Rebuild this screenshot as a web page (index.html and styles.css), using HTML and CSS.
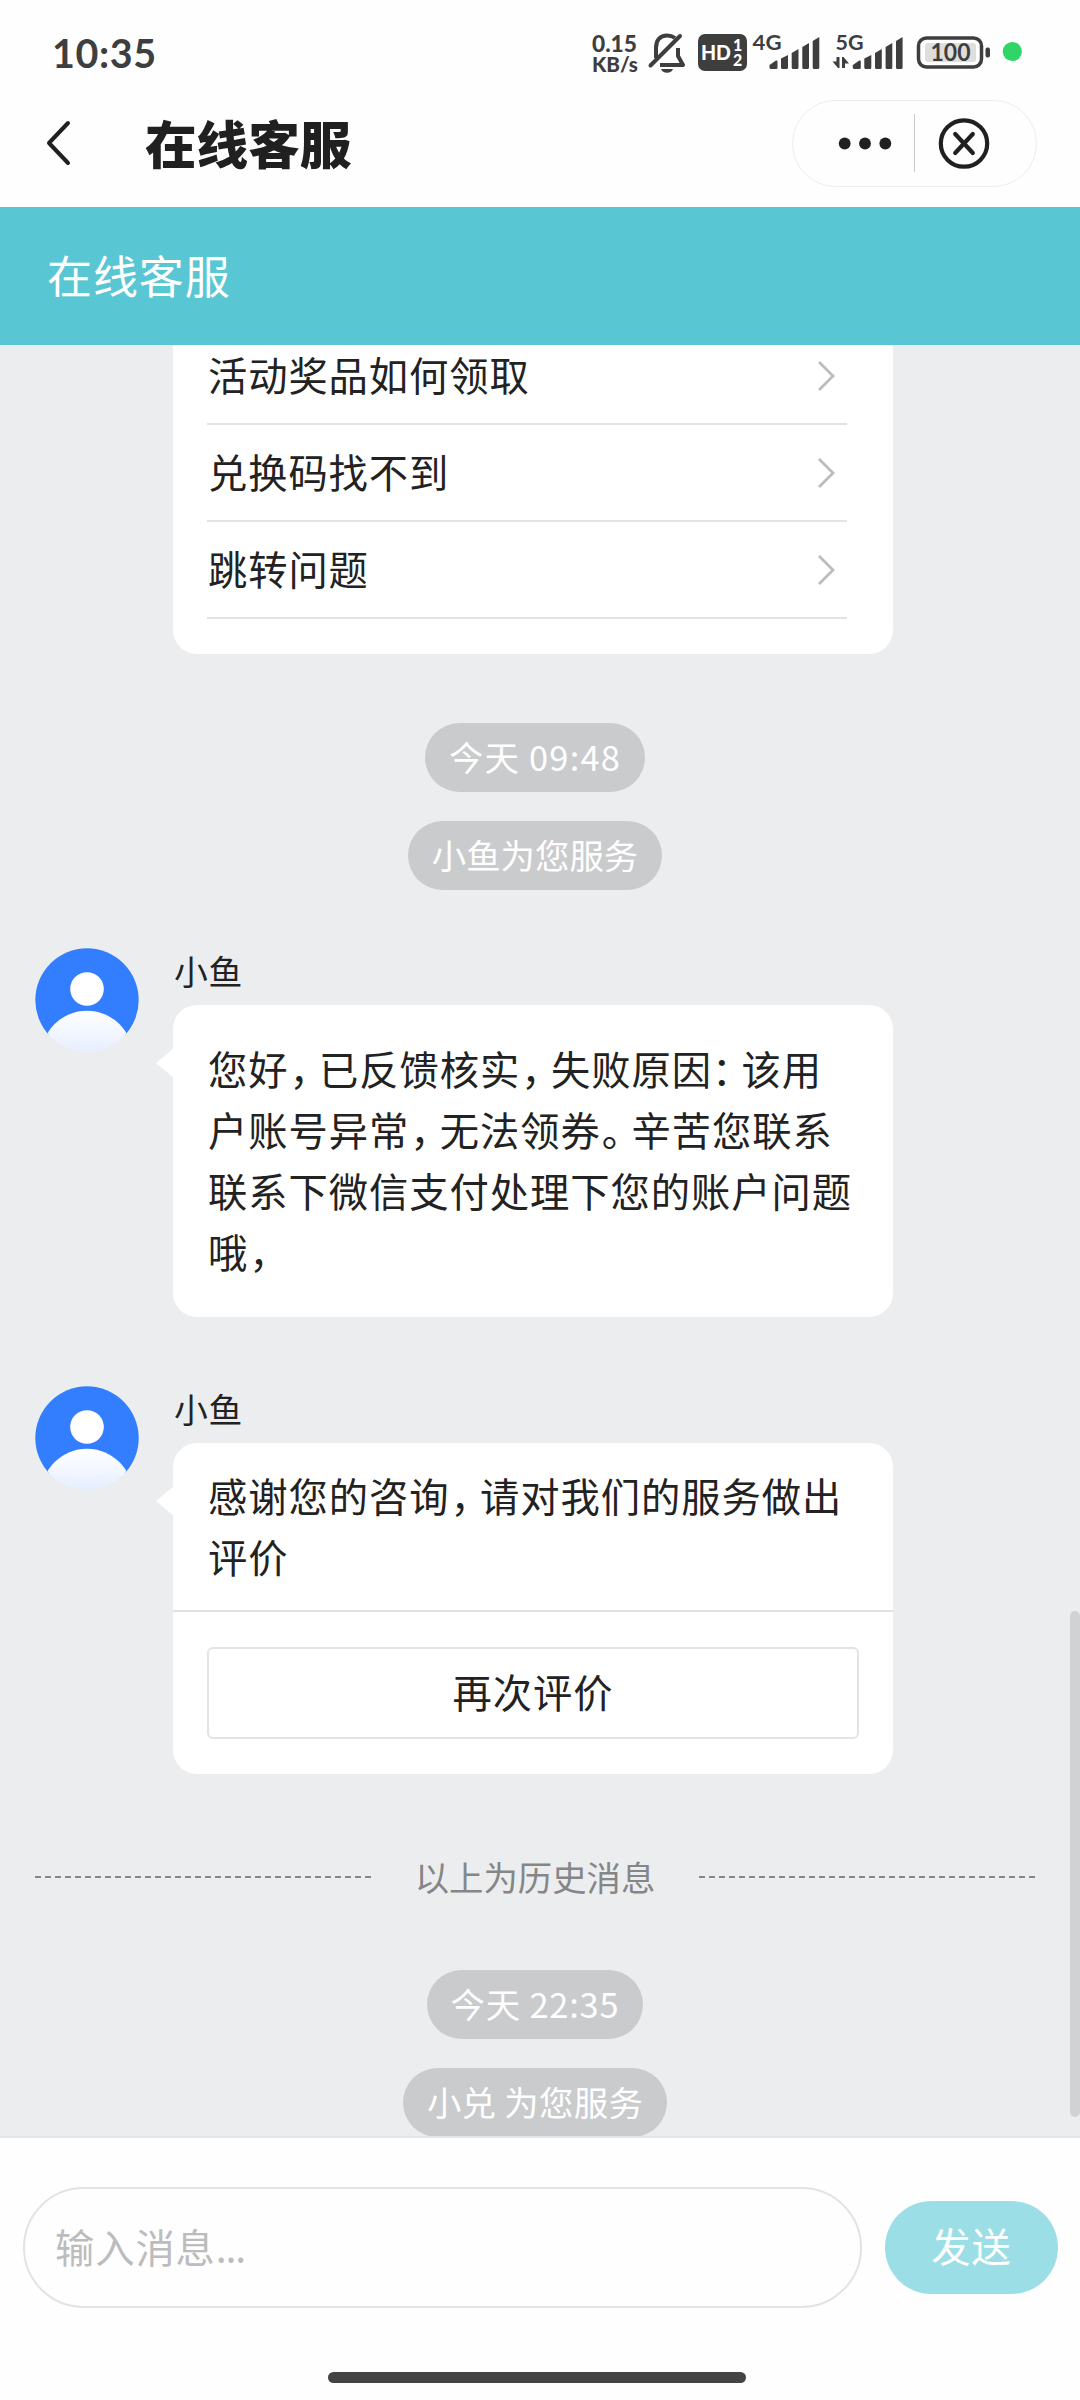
FILE: index.html
```html
<!DOCTYPE html>
<html lang="zh-CN">
<head>
<meta charset="utf-8">
<title>在线客服</title>
<link rel="stylesheet" href="styles.css">
</head>
<body>
<div class="screen">
  <div class="status">
    <span class="clock">10:35</span>
    <svg class="status-icons" width="440" height="50" viewBox="590 28 440 50">
      <g fill="#3e3e3e" class="status-text heavy">
        <text x="592" y="52" font-size="22.500" textLength="45" lengthAdjust="spacingAndGlyphs">0.15</text>
        <text x="592" y="72" font-size="20.500" textLength="46" lengthAdjust="spacingAndGlyphs">KB/s</text>
      </g>
      <g fill="none" stroke="#3e3e3e" stroke-width="4" stroke-linejoin="round">
        <path d="M656 58V48C656 40 660 35.500 667 35.500C670 35.500 673 36.500 675 38M678 48V56L683 65H660"/>
        <path d="M650.500 65.500L680 36" stroke-linecap="round"/>
      </g>
      <path d="M661 69H673C672 71.500 670 72.700 667 72.700C664 72.700 662 71.500 661 69Z" fill="#3e3e3e"/>
      <rect x="698" y="34" width="49" height="37" rx="7" fill="#3e3e3e"/>
      <g fill="#fff" class="status-text heavy">
        <text x="701" y="60" font-size="21" textLength="30" lengthAdjust="spacingAndGlyphs">HD</text>
        <text x="733" y="50.500" font-size="16">1</text>
        <text x="733" y="66" font-size="16">2</text>
      </g>
      <g fill="#3e3e3e" class="status-text">
        <text x="752.500" y="50" font-size="20.500" textLength="29" lengthAdjust="spacingAndGlyphs">4G</text>
        <text x="835.500" y="50" font-size="20.500" textLength="28" lengthAdjust="spacingAndGlyphs">5G</text>
      </g>
      <path id="bars" fill="#3e3e3e" d="M769.500 65L776 60.500Q777.500 60 777.500 61.500V67.500Q777.500 69 776 69H771Q769.500 69 769.500 67.500ZM781 58.500L788 55V67.500Q788 69 786.500 69H782.500Q781 69 781 67.500ZM791.700 53L798.500 49V67.500Q798.500 69 797 69H793.200Q791.700 69 791.700 67.500ZM802.300 47L809 43V67.500Q809 69 807.500 69H803.800Q802.300 69 802.300 67.500ZM812.700 41L819.300 37V67.500Q819.300 69 817.800 69H814.200Q812.700 69 812.700 67.500Z"/>
      <use href="#bars" x="83.300"/>
      <path fill="#3e3e3e" d="M836.500 57H839.500V68H838L832.500 61.500H836.500ZM842 68V57H843.500L849 63.500H845V68Z"/>
      <rect x="918.500" y="38" width="63" height="29" rx="8" fill="none" stroke="#3e3e3e" stroke-width="3.500"/>
      <rect x="925" y="43" width="51" height="19" rx="3" fill="#dedede"/>
      <rect x="985.500" y="47.500" width="4.500" height="10" rx="2" fill="#3e3e3e"/>
      <text class="status-text" fill="#3e3e3e" x="930.500" y="61" font-size="24" textLength="40" lengthAdjust="spacingAndGlyphs">100</text>
      <circle cx="1012.300" cy="51.500" r="9.600" fill="#2fd566"/>
    </svg>
  </div>

  <div class="nav">
    <svg class="back" width="28" height="50" viewBox="0 0 28 50"><path d="M24 5L5 25L24 45" fill="none" stroke="#202020" stroke-width="4" stroke-linecap="round" stroke-linejoin="round"/></svg>
    <h1 class="nav-title">在线客服</h1>
    <div class="capsule">
      <svg width="245" height="86" viewBox="0 0 245 86">
        <g fill="#202020"><circle cx="52.700" cy="43.500" r="5.900"/><circle cx="73" cy="43.500" r="5.900"/><circle cx="93.300" cy="43.500" r="5.900"/></g>
        <path d="M122.500 14V72" stroke="#c8c8c8"/>
        <g fill="none" stroke="#202020" stroke-width="4.200" stroke-linecap="round"><circle cx="172" cy="43.500" r="23.200"/><path d="M163.200 34L180.800 53M180.800 34L163.200 53"/></g>
      </svg>
    </div>
  </div>

  <header class="banner">在线客服</header>

  <main class="chat">
    <section class="faq">
      <div class="faq-row"><span>活动奖品如何领取</span><svg class="chev" viewBox="0 0 20 32"><path d="M3 2L17 16L3 30"/></svg></div>
      <div class="faq-row"><span>兑换码找不到</span><svg class="chev" viewBox="0 0 20 32"><path d="M3 2L17 16L3 30"/></svg></div>
      <div class="faq-row"><span>跳转问题</span><svg class="chev" viewBox="0 0 20 32"><path d="M3 2L17 16L3 30"/></svg></div>
    </section>

    <div class="notices first-notices">
      <span class="pill time-a">今天 09:48</span>
      <span class="pill">小鱼为您服务</span>
    </div>

    <article class="msg">
      <svg class="avatar" viewBox="0 0 104 104">
        <defs>
          <clipPath id="face"><circle cx="52" cy="52" r="51.700"/></clipPath>
          <linearGradient id="torso" x1="0" y1="0" x2="0" y2="1" gradientUnits="objectBoundingBox"><stop offset="0" stop-color="#fff"/><stop offset=".45" stop-color="#e6eeff"/></linearGradient>
        </defs>
        <g clip-path="url(#face)"><rect width="104" height="87" fill="#337eff"/><circle cx="52" cy="108.500" r="45.800" fill="url(#torso)"/><circle cx="52" cy="41" r="16.800" fill="#fff"/></g>
      </svg>
      <div class="msg-body">
        <div class="name">小鱼</div>
        <div class="bubble reply">您好<i>，</i>已反馈核实<i>，</i>失败原因<i class="colon">：</i>该用<br>户账号异常<i>，</i>无法领券<i>。</i>辛苦您联系<br>联系下微信支付处理下您的账户问题<br>哦<i>，</i></div>
      </div>
    </article>

    <article class="msg second">
      <svg class="avatar" viewBox="0 0 104 104">
        <g clip-path="url(#face)"><rect width="104" height="87" fill="#337eff"/><circle cx="52" cy="108.500" r="45.800" fill="url(#torso)"/><circle cx="52" cy="41" r="16.800" fill="#fff"/></g>
      </svg>
      <div class="msg-body">
        <div class="name">小鱼</div>
        <div class="bubble rating">
          <div class="rating-text">感谢您的咨询<i>，</i>请对我们的服务做出<br>评价</div>
          <div class="rating-action"><button class="rate-btn">再次评价</button></div>
        </div>
      </div>
    </article>

    <div class="history"><span class="dash"></span><span class="history-text">以上为历史消息</span><span class="dash"></span></div>

    <div class="notices last-notices">
      <span class="pill time-b">今天 22:35</span>
      <span class="pill service-b">小兑 为您服务</span>
    </div>
    <div class="scrollbar"></div>
  </main>

  <footer class="composer">
    <div class="input-row">
      <div class="input">输入消息<span class="dots">...</span></div>
      <button class="send">发送</button>
    </div>
    <div class="home"></div>
  </footer>
</div>
</body>
</html>
```
FILE: styles.css
```css
* { box-sizing: border-box; }
body { margin: 0; font-family: "Noto Sans CJK SC", sans-serif; color: #222; }
i { font-style: normal; font-feature-settings: "halt"; margin: 0 9px 0 1px; }
i.colon { margin: 0 9px 0 0; }
svg { display: block; flex: none; }
button { font: inherit; color: inherit; letter-spacing: inherit; padding: 0; }

.screen { width: 1080px; height: 2400px; display: flex; flex-direction: column; background: #fefefe; overflow: hidden; }

.status { height: 86px; flex: none; display: flex; justify-content: space-between; padding: 28px 50px 0 52px; }
.clock { font: 700 39.500px/50px Lato, sans-serif; color: #3e3e3e; letter-spacing: .6px; }
.status-text { font-family: Lato, sans-serif; font-weight: 700; }
.heavy { font-weight: 900; }

.nav { height: 121px; flex: none; display: flex; align-items: flex-start; padding-left: 44px; }
.back { margin-top: 32px; }
.nav-title { margin: 17px 0 0 73px; font-size: 51.600px; line-height: 78px; font-weight: 900; color: #202020; }
.capsule { width: 245px; height: 87px; margin: 14px 43px 0 auto; border: 1px solid #ededed; border-radius: 44px; }
.capsule svg { margin: -1px; }

.banner { height: 138px; flex: none; padding-left: 47px; background: #59c6d4; color: #fff; font-size: 45px; letter-spacing: .9px; line-height: 136px; }

.chat { position: relative; height: 1791px; flex: none; overflow: hidden; background: #ecedef; }
.faq { width: 720px; height: 309px; margin-left: 173px; padding: 0 46px 35px 34px; display: flex; flex-direction: column; justify-content: flex-end; background: #fff; border-radius: 0 0 24px 24px; }
.faq-row { height: 97px; flex: none; display: flex; align-items: center; justify-content: space-between; padding: 0 11px 0 1px; border-bottom: 2px solid #e3e3e4; font-size: 39.300px; letter-spacing: .9px; line-height: 60px; }
.faq-row span { padding-bottom: 4px; }
.chev { width: 20px; height: 32px; fill: none; stroke: #bcbcbc; stroke-width: 2.800px; }

.notices { display: flex; flex-direction: column; align-items: center; gap: 29px; padding-right: 10px; }
.first-notices { margin-top: 69px; }
.pill { flex: none; height: 69px; padding: 0 24px; border-radius: 35px; background: #cacbcd; color: #fff; font-size: 34.400px; line-height: 67px; text-align: center; white-space: nowrap; }
.time-a { width: 220px; padding: 0; letter-spacing: 1.200px; }
.time-b { width: 216px; padding: 0; letter-spacing: .8px; }
.service-b { width: 264px; padding: 0; letter-spacing: .3px; }

.msg { display: flex; align-items: flex-start; margin-top: 58px; padding-left: 34.500px; }
.msg.second { margin-top: 69px; }
.avatar { width: 104px; height: 104px; }
.msg-body { width: 720px; margin-left: 34.500px; }
.name { height: 57px; padding-left: 1px; font-size: 33.800px; letter-spacing: .6px; line-height: 45px; }
.bubble { position: relative; background: #fff; border-radius: 24px; font-size: 39.300px; letter-spacing: .95px; line-height: 61px; white-space: nowrap; }
.bubble::before { content: ""; position: absolute; left: -17px; top: 43px; border: solid transparent; border-width: 15px 18px 15px 0; border-right-color: #fff; }
.reply { height: 312px; padding: 32px 35px; }
.rating { height: 331px; }
.rating-text { height: 169px; padding: 21px 35px; border-bottom: 2px solid #e1e2e3; }
.rating-action { padding: 35px 34px; }
.rate-btn { display: block; width: 652px; height: 92px; border: 2px solid #e2e3e4; border-radius: 6px; background: #fff; padding-bottom: 4px; line-height: 84px; }

.history { display: flex; align-items: center; justify-content: space-between; height: 52px; margin-top: 77px; padding: 0 45px 0 35px; }
.dash { width: 336px; height: 2px; background: repeating-linear-gradient(90deg, #868788 0 6px, transparent 6px 10px); }
.history-text { height: 52px; font-size: 34.400px; line-height: 50px; color: #858687; }
.last-notices { margin-top: 67px; }
.scrollbar { position: absolute; right: 0; top: 1266px; width: 10px; height: 506px; border-radius: 5px; background: #d1d2d4; }

.composer { flex: 1; border-top: 2px solid #e3e4e5; display: flex; flex-direction: column; align-items: center; }
.input-row { width: 1080px; display: flex; align-items: center; padding: 49px 22px 0 23px; justify-content: space-between; font-size: 39.300px; letter-spacing: .9px; }
.input { width: 839px; height: 121px; padding-left: 30px; border: 2px solid #e3e3e4; border-radius: 61px; color: #bcbcbc; line-height: 114px; }
.dots { letter-spacing: -1.200px; }
.send { width: 173px; height: 93px; border: 0; border-radius: 47px; background: #9bdee5; color: #fff; padding-bottom: 5px; line-height: 86px; }
.home { width: 418px; height: 11px; margin: 64px 6px 0 0; border-radius: 6px; background: #444; }
```
